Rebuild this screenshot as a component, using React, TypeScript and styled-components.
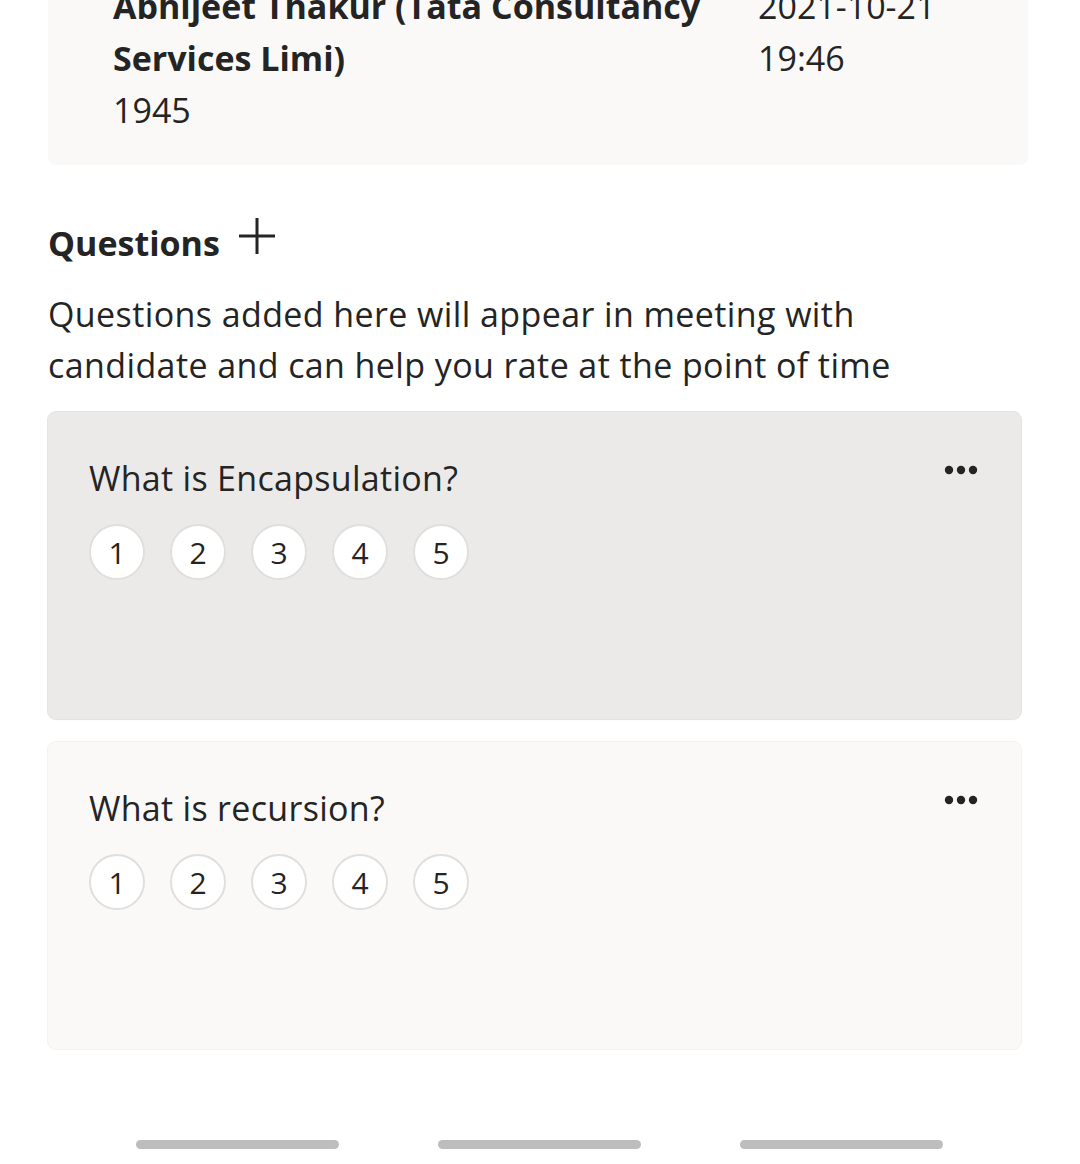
import { createGlobalStyle, styled } from "styled-components";

const GlobalStyle = createGlobalStyle`
  * { box-sizing: border-box; }
  html, body {
    margin: 0;
    padding: 0;
    background: #ffffff;
  }
  body {
    font-family: "Open Sans", "Noto Sans", sans-serif;
    color: #242424;
    overflow: hidden;
  }
`;

type Question = {
  id: number;
  title: string;
  active?: boolean;
};

const QUESTIONS: Question[] = [
  { id: 1, title: "What is Encapsulation?", active: true },
  { id: 2, title: "What is recursion?" },
];

const RATINGS = [1, 2, 3, 4, 5];

const PlusIcon = () => (
  <svg width="38" height="38" viewBox="0 0 38 38" fill="none">
    <path d="M19 1v36M1 19h36" stroke="#242424" strokeWidth="3" />
  </svg>
);

const MoreIcon = () => (
  <svg width="34" height="10" viewBox="0 0 34 10" fill="#242424">
    <circle cx="5" cy="5" r="4.2" />
    <circle cx="17" cy="5" r="4.2" />
    <circle cx="29" cy="5" r="4.2" />
  </svg>
);

const App = () => {
  return (
    <>
      <GlobalStyle />
      <Page>
        <InfoCard>
          <InfoName>
            Abhijeet Thakur (Tata Consultancy
            <br />
            Services Limi)
          </InfoName>
          <InfoDate>
            2021-10-21
            <br />
            19:46
          </InfoDate>
          <InfoCode>1945</InfoCode>
        </InfoCard>

        <SectionHeader>
          <SectionTitle>Questions</SectionTitle>
          <AddButton aria-label="Add question">
            <PlusIcon />
          </AddButton>
        </SectionHeader>

        <Description>
          Questions added here will appear in meeting with candidate and can
          help you rate at the point of time
        </Description>

        <QuestionList>
          {QUESTIONS.map((q) => (
            <QuestionCard key={q.id} $active={q.active}>
              <QuestionTop>
                <QuestionTitle>{q.title}</QuestionTitle>
                <MoreButton aria-label="More options">
                  <MoreIcon />
                </MoreButton>
              </QuestionTop>
              <RatingRow>
                {RATINGS.map((r) => (
                  <RatingCircle key={r}>{r}</RatingCircle>
                ))}
              </RatingRow>
            </QuestionCard>
          ))}
        </QuestionList>

        <PagerBar>
          <PagerDash />
          <PagerDash />
          <PagerDash />
        </PagerBar>
      </Page>
    </>
  );
};

const Page = styled.div`
  width: 1080px;
  height: 1204px;
  margin-top: -40px;
  padding: 0 48px;
  display: flex;
  flex-direction: column;
`;

const InfoCard = styled.div`
  width: 980px;
  background: #faf9f8;
  border-radius: 8px;
  padding: 20px 0 29px 65px;
  display: grid;
  grid-template-columns: 645px 230px;
  font-size: 34px;
  line-height: 52px;
`;

const InfoName = styled.div`
  font-weight: 700;
  white-space: nowrap;
`;

const InfoDate = styled.div`
  font-weight: 400;
`;

const InfoCode = styled.div`
  grid-column: 1 / span 2;
`;

const SectionHeader = styled.div`
  margin-top: 52px;
  display: flex;
  align-items: flex-start;
  gap: 18px;
`;

const SectionTitle = styled.h2`
  margin: 0;
  padding-top: 3px;
  font-size: 34px;
  line-height: 46px;
  font-weight: 700;
`;

const AddButton = styled.button`
  border: none;
  background: none;
  padding: 0;
  display: flex;
  cursor: pointer;
`;

const Description = styled.p`
  margin: 23px 0 0;
  font-size: 34px;
  line-height: 51px;
  letter-spacing: 0.4px;
  width: 960px;
`;

const QuestionList = styled.div`
  margin-top: 21px;
  display: flex;
  flex-direction: column;
  gap: 23px;
  width: 973px;
`;

const QuestionCard = styled.div<{ $active?: boolean }>`
  height: 307px;
  border-radius: 8px;
  padding: 40px 43px 0 41px;
  background: ${(p) => (p.$active ? "#ebeae9" : "#faf9f8")};
  box-shadow: 0 0 0 1px ${(p) => (p.$active ? "#e6e4e2" : "#f3f2f1")},
    0 1px 2px rgba(0, 0, 0, 0.04);
`;

const QuestionTop = styled.div`
  display: flex;
  justify-content: space-between;
  align-items: flex-start;
`;

const QuestionTitle = styled.div`
  font-size: 34px;
  line-height: 52px;
  letter-spacing: 0.3px;
`;

const MoreButton = styled.button`
  border: none;
  background: none;
  padding: 0;
  margin-top: 13px;
  display: flex;
  cursor: pointer;
`;

const RatingRow = styled.div`
  margin-top: 20px;
  display: flex;
  gap: 25px;
`;

const RatingCircle = styled.div`
  width: 56px;
  height: 56px;
  border-radius: 50%;
  background: #ffffff;
  border: 2px solid #e1dfdd;
  display: flex;
  align-items: center;
  justify-content: center;
  font-size: 30px;
  color: #242424;
`;

const PagerBar = styled.div`
  margin-top: auto;
  margin-bottom: 15px;
  margin-left: 88px;
  display: flex;
  gap: 99px;
`;

const PagerDash = styled.div`
  width: 203px;
  height: 9px;
  border-radius: 5px;
  background: #bdbdbd;
`;

export default App;
